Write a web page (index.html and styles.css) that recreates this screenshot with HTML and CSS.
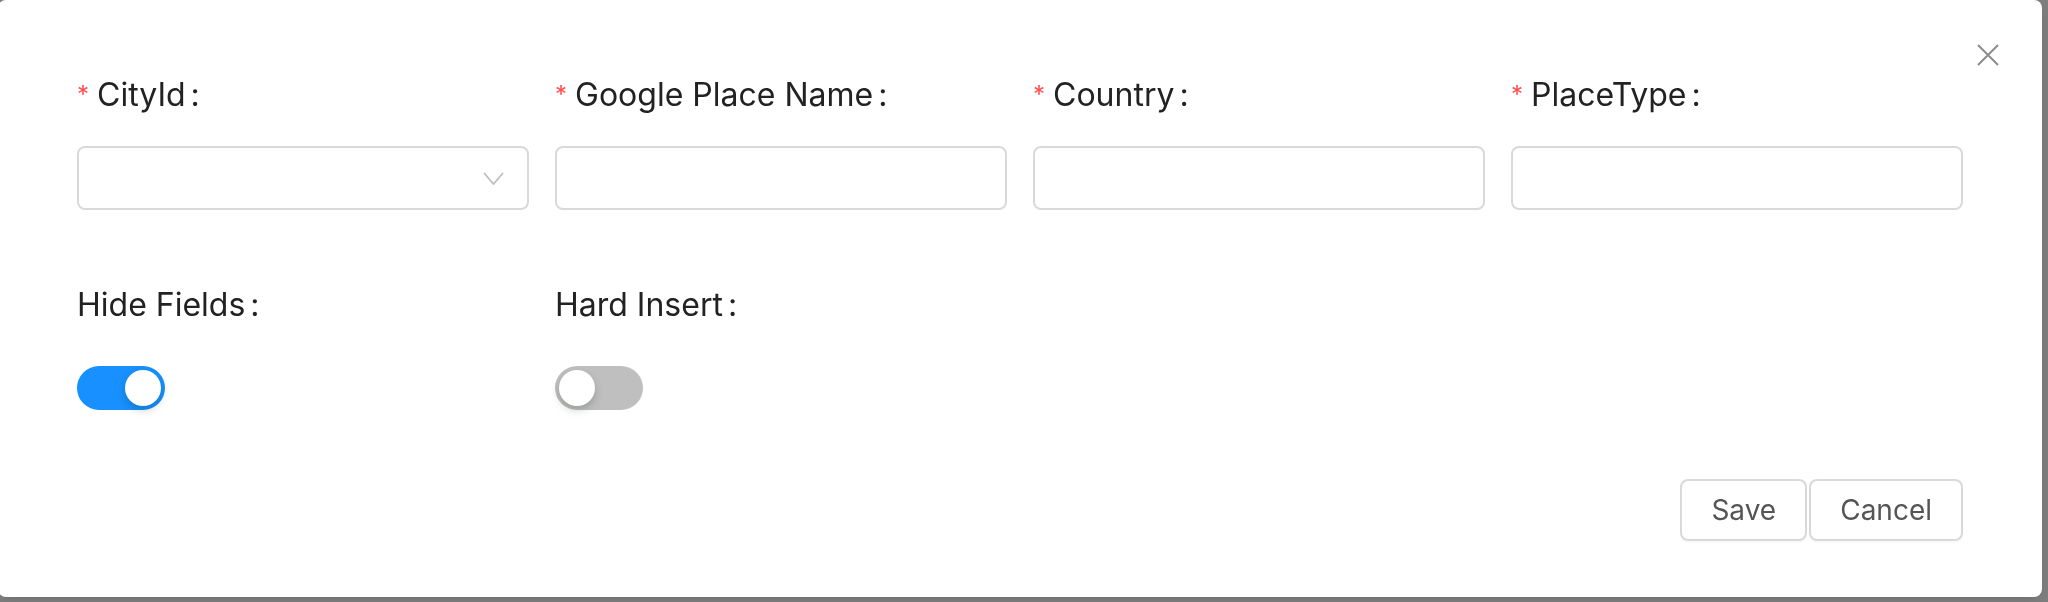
FILE: index.html
```html
<!DOCTYPE html>
<html lang="en">
<head>
<meta charset="utf-8">
<title>Place form</title>
<link rel="stylesheet" href="styles.css">
</head>
<body>
  <div class="mask"></div>
  <div class="modal">
    <button class="close" type="button" aria-label="Close">
      <svg width="22" height="22" viewBox="0 0 22 22"><path d="M1 1 L21 21 M21 1 L1 21" stroke="#8c8c8c" stroke-width="2" fill="none"/></svg>
    </button>
    <form class="form">
      <div class="grid">
        <div class="item">
          <label class="label"><span class="req">*</span>CityId<span class="colon">:</span></label>
          <div class="control">
            <div class="input select">
              <svg width="21" height="13" viewBox="0 0 21 13"><path d="M1 1 L10.5 12 L20 1" stroke="#bfbfbf" stroke-width="1.8" fill="none"/></svg>
            </div>
          </div>
        </div>
        <div class="item">
          <label class="label"><span class="req">*</span>Google Place Name<span class="colon">:</span></label>
          <div class="control"><div class="input"></div></div>
        </div>
        <div class="item">
          <label class="label"><span class="req">*</span>Country<span class="colon">:</span></label>
          <div class="control"><div class="input"></div></div>
        </div>
        <div class="item">
          <label class="label"><span class="req">*</span>PlaceType<span class="colon">:</span></label>
          <div class="control"><div class="input"></div></div>
        </div>
        <div class="item">
          <label class="label">Hide Fields<span class="colon">:</span></label>
          <div class="control"><span class="switch on"><span class="knob"></span></span></div>
        </div>
        <div class="item">
          <label class="label">Hard Insert<span class="colon">:</span></label>
          <div class="control"><span class="switch"><span class="knob"></span></span></div>
        </div>
      </div>
      <div class="footer">
        <button type="button" class="btn">Save</button>
        <button type="button" class="btn">Cancel</button>
      </div>
    </form>
  </div>
</body>
</html>
```
FILE: styles.css
```css
* { box-sizing: border-box; }
html, body {
  margin: 0;
  padding: 0;
  width: 2048px;
  height: 602px;
  overflow: hidden;
  background: #fff;
  font-family: Inter, "Noto Sans", "Liberation Sans", sans-serif;
}
.mask {
  position: fixed;
  inset: 0;
  background: rgba(0, 0, 0, 0.5);
}
.modal {
  position: absolute;
  top: 0;
  left: -2px;
  width: 2044px;
  background: #fff;
  border-radius: 8px;
  padding: 73px 79px 56px;
  box-shadow: 0 6px 16px rgba(0,0,0,0.08), 0 3px 6px -4px rgba(0,0,0,0.12);
}
.close {
  position: absolute;
  top: 44px;
  right: 43px;
  width: 22px;
  height: 22px;
  padding: 0;
  border: 0;
  background: none;
  display: flex;
}
.grid {
  display: grid;
  grid-template-columns: repeat(4, 452px);
  column-gap: 26px;
  row-gap: 73px;
}
.item {
  display: flex;
  flex-direction: column;
}
.label {
  display: block;
  height: 44px;
  line-height: 44px;
  margin-bottom: 29px;
  font-size: 32px;
  color: #222;
  white-space: nowrap;
}
.req {
  color: #ff4d4f;
  font-size: 24px;
  margin-right: 8px;
  vertical-align: 3px;
}
.colon {
  margin-left: 5px;
}
.control {
  height: 64px;
  display: flex;
  align-items: center;
}
.input {
  width: 100%;
  height: 64px;
  border: 2px solid #d9d9d9;
  border-radius: 8px;
  background: #fff;
}
.select {
  display: flex;
  align-items: center;
  justify-content: flex-end;
  padding-right: 23px;
}
.switch {
  width: 88px;
  height: 44px;
  border-radius: 22px;
  background: #bfbfbf;
  padding: 4px;
  display: flex;
  justify-content: flex-start;
}
.switch.on {
  background: #1890ff;
  justify-content: flex-end;
}
.knob {
  width: 36px;
  height: 36px;
  border-radius: 50%;
  background: #fff;
  box-shadow: 0 4px 8px rgba(0, 35, 11, 0.2);
}
.footer {
  margin-top: 59px;
  display: flex;
  justify-content: flex-end;
  gap: 2px;
}
.btn {
  height: 62px;
  padding: 0 29px;
  border: 2px solid #d9d9d9;
  border-radius: 8px;
  background: #fff;
  font-family: Inter, "Noto Sans", "Liberation Sans", sans-serif;
  font-size: 28px;
  color: #555;
  box-shadow: 0 2px 0 rgba(0,0,0,0.02);
}
```
